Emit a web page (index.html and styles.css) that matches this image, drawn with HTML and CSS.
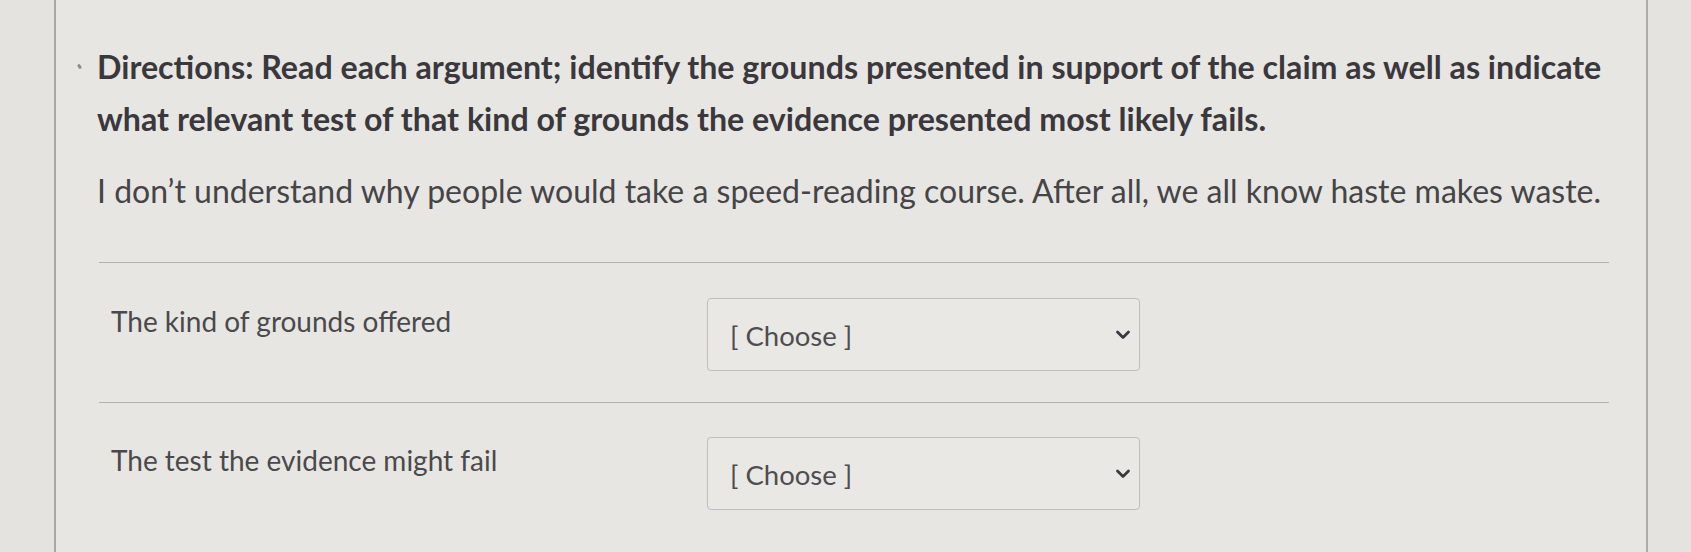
FILE: index.html
```html
<!DOCTYPE html>
<html lang="en">
<head>
<meta charset="utf-8">
<title>Question</title>
<link rel="stylesheet" href="styles.css">
</head>
<body>
<div class="page">
  <div class="panel">
    <div class="content">
      <span class="tick"></span>
      <p class="directions">Directions: Read each argument; identify the grounds presented in support of the claim as well as indicate what relevant test of that kind of grounds the evidence presented most likely fails.</p>
      <p class="argument">I don’t understand why people would take a speed-reading course. After all, we all know haste makes waste.</p>
    </div>
    <div class="answers">
      <div class="row">
        <div class="label">The kind of grounds offered</div>
        <div class="select">
          <span class="select-text">[ Choose ]</span>
          <svg class="chev" width="16" height="10" viewBox="0 0 16 10"><path d="M2.5 2 L8 7.5 L13.5 2" fill="none" stroke="#3a3a3e" stroke-width="2.8" stroke-linecap="round" stroke-linejoin="round"/></svg>
        </div>
      </div>
      <div class="row">
        <div class="label">The test the evidence might fail</div>
        <div class="select">
          <span class="select-text">[ Choose ]</span>
          <svg class="chev" width="16" height="10" viewBox="0 0 16 10"><path d="M2.5 2 L8 7.5 L13.5 2" fill="none" stroke="#3a3a3e" stroke-width="2.8" stroke-linecap="round" stroke-linejoin="round"/></svg>
        </div>
      </div>
    </div>
  </div>
</div>
</body>
</html>
```

FILE: styles.css
```css
html, body {
  margin: 0;
  padding: 0;
}
body {
  background: #e4e3df;
  font-family: Lato, "Open Sans", "Liberation Sans", sans-serif;
  width: 1691px;
  height: 552px;
  overflow: hidden;
}
.page {
  padding-left: 54px;
  height: 552px;
}
.panel {
  width: 1594px;
  height: 552px;
  background: #e7e6e2;
  border-left: 2px solid #a8a7a5;
  border-right: 2px solid #aeadab;
  box-sizing: border-box;
}
.content {
  padding: 41px 0 0 41px;
  position: relative;
}
.tick {
  position: absolute;
  left: 22px;
  top: 64px;
  width: 3px;
  height: 5px;
  border-radius: 2px;
  background: #8c8b8b;
  transform: rotate(-35deg);
}
.directions {
  margin: 0;
  font-weight: 700;
  font-size: 32.2px;
  line-height: 52px;
  color: #3a383d;
  width: 1540px;
}
.argument {
  margin: 20px 0 0 0;
  font-size: 32px;
  line-height: 52px;
  color: #454447;
}
.answers {
  margin: 45px 0 0 43px;
  width: 1510px;
}
.row {
  display: flex;
  align-items: flex-start;
  border-top: 1.5px solid #b3b2b0;
  padding: 35px 0 31px 0;
}
.row + .row {
  padding-top: 34px;
}
.label {
  width: 608px;
  padding-left: 12px;
  margin-top: 6px;
  font-size: 28px;
  line-height: 34px;
  color: #4a494c;
  box-sizing: border-box;
}
.select {
  width: 433px;
  height: 73px;
  border: 1.5px solid #bfbebc;
  border-radius: 4px;
  background: #e9e8e5;
  box-sizing: border-box;
  display: flex;
  align-items: center;
  justify-content: space-between;
  padding: 0 8px 0 22px;
}
.select-text {
  font-size: 27.5px;
  color: #4e4d50;
  margin-top: 2px;
}
.chev {
  display: block;
}
```
